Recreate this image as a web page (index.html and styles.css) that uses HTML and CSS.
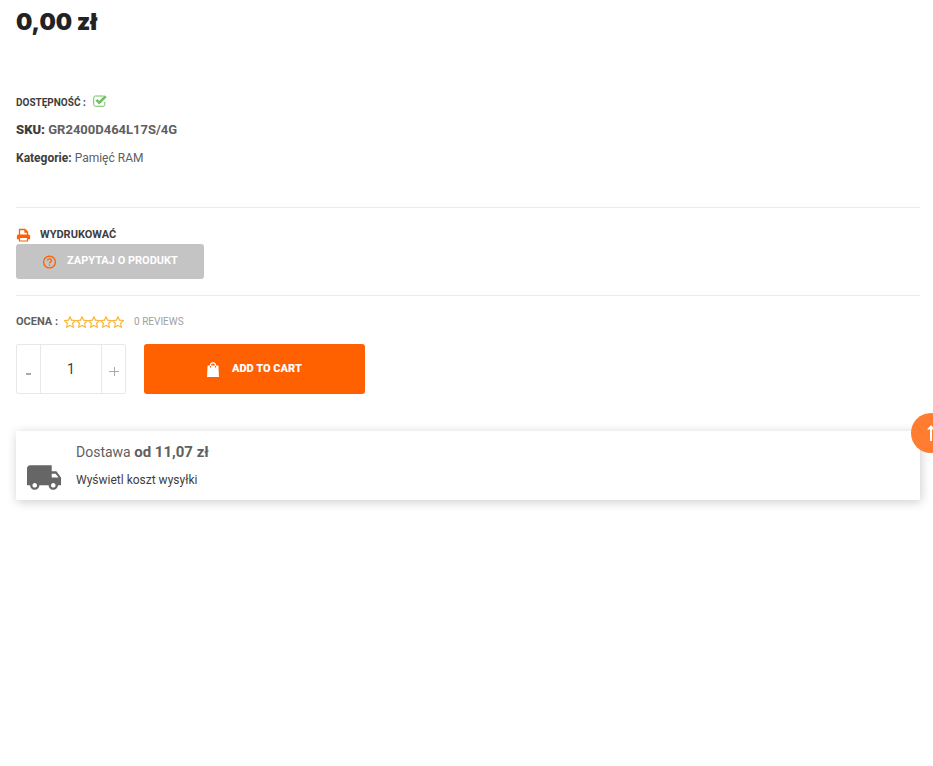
FILE: index.html
```html
<!DOCTYPE html>
<html lang="pl">
<head>
<meta charset="utf-8">
<meta name="viewport" content="width=device-width, initial-scale=1">
<title>GR2400D464L17S/4G</title>
<link rel="stylesheet" href="styles.css">
</head>
<body>
<main class="product">
  <p class="price">0,00 zł</p>

  <section class="meta">
    <p class="availability">DOSTĘPNOŚĆ :
      <svg class="check" viewBox="0 0 14 12" aria-hidden="true"><path d="M10.5 1H2.5A1.8 1.8 0 0 0 .7 2.8v6.7A1.8 1.8 0 0 0 2.5 11.3h7.5a1.8 1.8 0 0 0 1.8-1.8V7" fill="none" stroke="currentColor"/><path d="M3.4 4.8 6.2 7.6l6.6-6.4" fill="none" stroke="currentColor" stroke-width="2.6"/></svg>
    </p>
    <p class="sku"><b>SKU:</b> <span>GR2400D464L17S/4G</span></p>
    <p class="category"><b>Kategorie:</b> <a href="#">Pamięć RAM</a></p>
  </section>

  <section class="actions">
    <a class="print" href="#">
      <svg class="print-icon" viewBox="0 0 14 14" aria-hidden="true"><path d="M3 7V1.5h5.500l2.500 2.500V7M8.500 1.500V4H11" fill="none" stroke="currentColor" stroke-width="1.3"/><path fill="currentColor" fill-rule="evenodd" d="M2 6.5h10a1.6 1.6 0 0 1 1.6 1.6v2.7a.4.4 0 0 1-.4.4H11.6V13.5H2.4v-2.3H.8a.4.4 0 0 1-.4-.4v-2.7A1.6 1.6 0 0 1 2 6.5zM3.6 10V12.4h6.8V10z"/></svg>
      WYDRUKOWAĆ
    </a>
    <button class="ask" type="button">
      <svg class="ask-icon" viewBox="0 0 14 14" aria-hidden="true"><circle cx="7" cy="7" r="5.9" fill="none" stroke="currentColor" stroke-width="1.3"/><path d="M5 5.6A2 2 0 0 1 7 3.8a1.9 1.9 0 0 1 2 1.8C9 7 7 7.1 7 8.6M7 9.5v1.3" fill="none" stroke="currentColor" stroke-width="1.3"/></svg>
      <span>ZAPYTAJ O PRODUKT</span>
    </button>
  </section>

  <section class="rating">
    <span class="rating-label">OCENA :</span>
    <svg class="stars" viewBox="0 0 60 12" role="img" aria-label="0 / 5">
      <defs><path id="star" d="M6 .7 7.5 4.1l4 .5-2.9 2.7.7 3.9L6 9.4l-3.3 1.8.7-3.9L.5 4.6l4-.5z" fill="none" stroke="currentColor" stroke-width="1.2"/></defs>
      <use href="#star"/><use href="#star" x="12"/><use href="#star" x="24"/><use href="#star" x="36"/><use href="#star" x="48"/>
    </svg>
    <a class="reviews" href="#">0 REVIEWS</a>
  </section>

  <form class="purchase">
    <div class="quantity">
      <button type="button" aria-label="Mniej"><svg viewBox="0 0 12 12" aria-hidden="true"><path d="M3 8h5" stroke="currentColor" stroke-width="2"/></svg></button>
      <input type="text" inputmode="numeric" value="1" aria-label="Ilość">
      <button type="button" aria-label="Więcej"><svg viewBox="0 0 12 12" aria-hidden="true"><path d="M1 5.5h10M6.5 1v9" stroke="currentColor"/></svg></button>
    </div>
    <button class="add" type="button">
      <svg class="bag" viewBox="0 0 12 15" aria-hidden="true"><path d="M3.5 5V3.2a2.5 2.3 0 0 1 5 0V5" fill="none" stroke="currentColor" stroke-width="1.1"/><path d="M.6 3.5h10.8L12 15H0z" fill="currentColor"/><path d="M3.5 4v1.6M8.5 4v1.6" stroke="#ff6000"/></svg>
      <span>ADD TO CART</span>
    </button>
  </form>

  <section class="shipping">
    <svg class="truck" viewBox="1 4 22 16" aria-hidden="true"><path fill="currentColor" d="M20 8h-3V4H3c-1.1 0-2 .9-2 2v11h2c0 1.66 1.34 3 3 3s3-1.34 3-3h6c0 1.66 1.34 3 3 3s3-1.34 3-3h2v-5l-3-4zM6 18.5c-.83 0-1.5-.67-1.5-1.5s.67-1.5 1.5-1.5 1.5.67 1.5 1.5-.67 1.5-1.5 1.5zm13.5-9 1.96 2.5H17V9.5h2.5zm-1.5 9c-.83 0-1.5-.67-1.5-1.5s.67-1.5 1.5-1.5 1.5.67 1.5 1.5-.67 1.5-1.5 1.5z"/></svg>
    <div>
      <p class="shipping-cost">Dostawa <b>od 11,07 zł</b></p>
      <a class="shipping-link" href="#">Wyświetl koszt wysyłki</a>
    </div>
  </section>
</main>
<a class="to-top" href="#" aria-label="Do góry"><svg viewBox="0 0 16 20" aria-hidden="true"><path d="M8 18V4" fill="none" stroke="currentColor" stroke-width="2"/><path d="M4 6.5 8 2l4 4.5z" fill="currentColor"/></svg></a>
</body>
</html>
```
FILE: styles.css
```css
* { box-sizing: border-box; }
body {
  margin: 0;
  background: #fff;
  color: #606060;
  font: 12px/28px Roboto, "Liberation Sans", sans-serif;
  overflow-x: hidden;
}
p { margin: 0; }
a { color: inherit; text-decoration: none; }
button, input { font: inherit; color: inherit; border: 0; margin: 0; padding: 0; background: none; }
button { cursor: pointer; }
svg { display: block; flex: none; }

.product { padding: 4px 13px 32px 16px; }
.price { color: #222; font: 900 23px/36px Inter, sans-serif; }

.meta { padding: 49px 0 35px; }
.meta b { color: #3d3d3d; }
.availability { display: flex; align-items: center; gap: 7px; color: #3d3d3d; font-size: 10px; font-weight: 700; line-height: 27px; }
.check { width: 14px; height: 12px; margin-bottom: 4px; color: #72c15f; }
.sku { font-size: 13px; font-weight: 700; }

.actions { padding: 16px 0; border: solid #ebebeb; border-width: 1px 0; }
.print { display: flex; align-items: center; gap: 9px; width: max-content; padding-top: 1px; color: #3d3d3d; font-size: 11px; font-weight: 700; line-height: 19px; }
.print-icon { width: 15px; height: 14px; color: #ff6000; }
.ask { display: flex; align-items: center; gap: 10px; height: 35px; padding: 0 26px; border-radius: 3px; background: #c4c4c4; color: #fff; font-size: 11px; font-weight: 700; line-height: 20px; }
.ask span { padding-bottom: 2px; }
.ask-icon { width: 15px; height: 14px; color: #ff6000; }

.rating { display: flex; align-items: center; height: 20px; margin-top: 16px; font-size: 11px; }
.rating-label { font-weight: 700; }
.stars { width: 60px; height: 12px; margin: 0 10px 0 6px; color: #f8b83c; }
.reviews { color: #a0a0a0; font-size: 10px; }

.purchase { display: flex; gap: 18px; margin-top: 12px; }
.quantity { display: flex; width: 110px; height: 50px; border: 1px solid #e8e8e8; border-radius: 2px; }
.quantity button { display: flex; align-items: center; justify-content: center; width: 23px; padding-top: 5px; color: #aaa; }
.quantity button svg { width: 12px; height: 12px; }
.quantity input { flex: 1; min-width: 0; border: solid #e8e8e8; border-width: 0 1px; color: #3d3d3d; font-size: 14px; text-align: center; }
.add { display: flex; align-items: center; gap: 13px; height: 50px; padding: 0 63px; border-radius: 3px; background: #ff6000; color: #fff; font-size: 11px; font-weight: 900; }
.bag { width: 12px; height: 15px; }

.shipping { display: flex; align-items: flex-end; gap: 15px; margin-top: 37px; padding: 7px 11px 6px; box-shadow: 1px 2px 10px rgba(0, 0, 0, .2); }
.truck { width: 34px; height: 25px; margin-bottom: 4px; color: #666; }
.shipping-cost { font-size: 14px; }
.shipping-cost b { font-size: 15px; }
.shipping-link { display: block; color: #3d3d3d; }

.to-top { position: fixed; top: 413px; right: -18px; display: flex; align-items: center; justify-content: center; width: 40px; height: 40px; border-radius: 50%; background: #ff7c30; color: #fff; }
.to-top svg { width: 16px; height: 20px; }
```
